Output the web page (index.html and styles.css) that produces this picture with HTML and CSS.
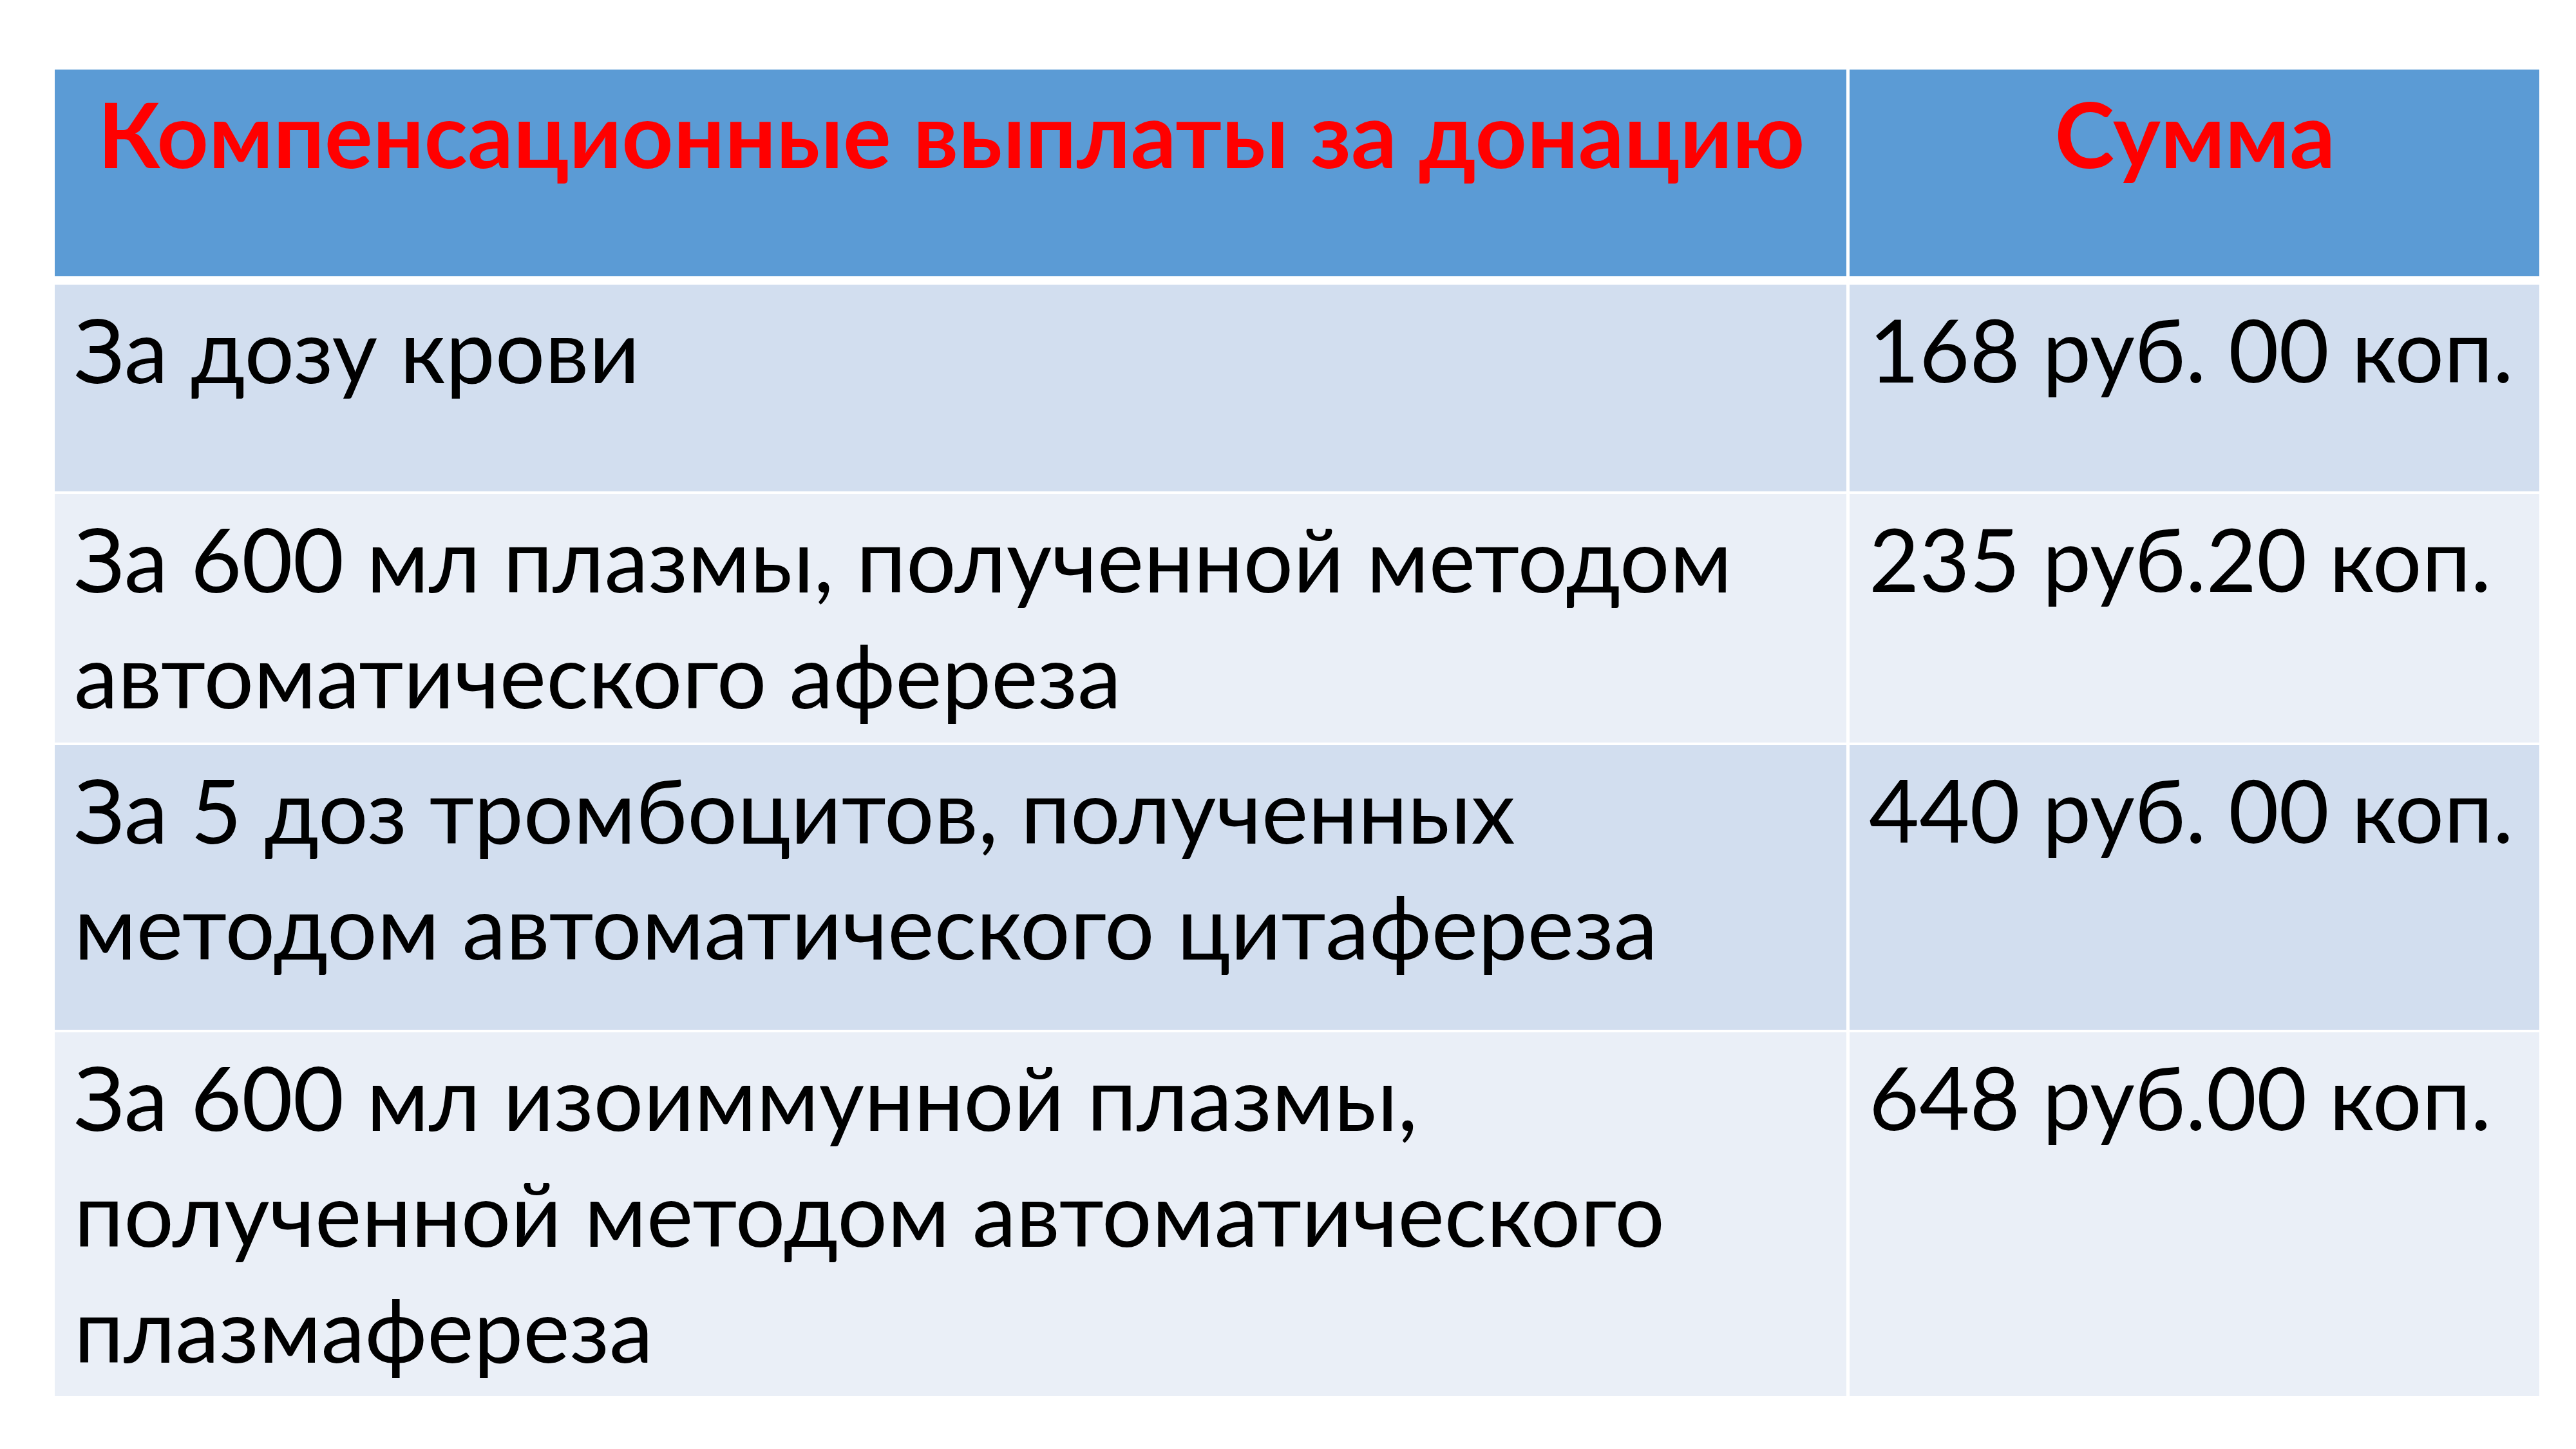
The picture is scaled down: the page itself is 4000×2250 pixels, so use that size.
FILE: index.html
```html
<!DOCTYPE html>
<html lang="ru">
<head>
<meta charset="utf-8">
<title>Компенсационные выплаты за донацию</title>
<link rel="stylesheet" href="styles.css">
</head>
<body>
<main class="slide">
  <div class="table">
    <div class="row row-head">
      <div class="cell head">Компенсационные выплаты за донацию</div>
      <div class="cell head">Сумма</div>
    </div>
    <div class="row row-1 odd">
      <div class="cell">За дозу крови</div>
      <div class="cell amount">168 руб. 00 коп.</div>
    </div>
    <div class="row row-2 even">
      <div class="cell">За 600 мл плазмы, полученной методом автоматического афереза</div>
      <div class="cell amount">235 руб.20 коп.</div>
    </div>
    <div class="row row-3 odd">
      <div class="cell">За 5 доз тромбоцитов, полученных методом автоматического цитафереза</div>
      <div class="cell amount">440 руб. 00 коп.</div>
    </div>
    <div class="row row-4 even">
      <div class="cell">За 600 мл изоиммунной плазмы, полученной методом автоматического плазмафереза</div>
      <div class="cell amount">648 руб.00 коп.</div>
    </div>
  </div>
</main>
</body>
</html>
```
FILE: styles.css
```css
html, body {
  margin: 0;
  padding: 0;
  background: #ffffff;
}

.slide {
  width: 4000px;
  height: 2250px;
  box-sizing: border-box;
  padding: 108px 0 0 85px;
  font-family: "Lato", "Liberation Sans", sans-serif;
  color: #000000;
}

.table {
  width: 3858px;
  display: flex;
  flex-direction: column;
  gap: 4px;
}

.row {
  display: grid;
  grid-template-columns: 2782px 1071px;
  column-gap: 5px;
}

.row-head { height: 321px; margin-bottom: 9px; }
.row-1 { height: 321px; }
.row-2 { height: 386px; }
.row-3 { height: 442px; }
.row-4 { height: 565px; }

.cell {
  box-sizing: border-box;
  padding: 10px 28px 0 30px;
  font-size: 137px;
  line-height: 180px;
}

.amount {
  font-size: 135px;
  white-space: nowrap;
  padding-right: 0;
}

.row-head .cell { background: #5b9bd5; }
.odd .cell { background: #d2deef; }
.even .cell { background: #eaeff7; }

.head {
  color: #ff0000;
  font-weight: 700;
  font-size: 140px;
  padding-top: 9px;
  text-align: center;
}
```
